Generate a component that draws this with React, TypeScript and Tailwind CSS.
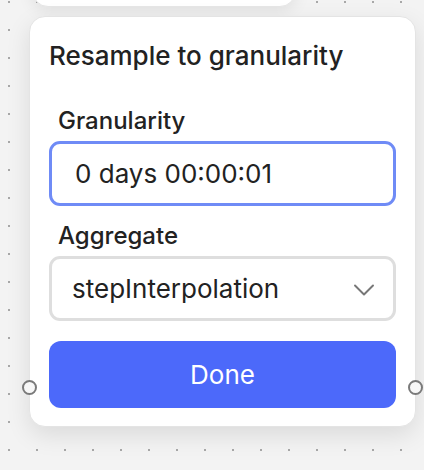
import { ChevronDown } from 'lucide-react';

// Handle dot on the side of a node
function Handle({ side }: { side: 'left' | 'right' }) {
  return (
    <div
      className={
        side === 'left'
          ? 'absolute left-[-8px] top-[363px] w-[15px] h-[15px] rounded-full border-2 border-[#7a7a7a] bg-[#f7f7f7]'
          : 'absolute right-[-8px] top-[363px] w-[15px] h-[15px] rounded-full border-2 border-[#7a7a7a] bg-[#f7f7f7]'
      }
    />
  );
}

export default function App() {
  return (
    <div
      className="relative w-[424px] h-[470px] overflow-hidden bg-[#f3f3f3] bg-[radial-gradient(circle,#a8a8a8_1px,transparent_1.2px)] bg-[length:28px_28px] bg-[position:-5px_-12px]"
      style={{ fontFamily: 'Inter, "Noto Sans", sans-serif' }}
    >
      {/* previous node, mostly off screen */}
      <div className="absolute left-[32px] top-[-60px] w-[264px] h-[67px] rounded-[16px] bg-white border border-[#e6e6e6] shadow-[0_4px_16px_rgba(0,0,0,0.08)]" />

      {/* resample node */}
      <div className="absolute left-[29px] top-[16px] w-[387px] h-[411px] rounded-[16px] bg-white border border-[#e4e4e4] shadow-[0_8px_24px_rgba(0,0,0,0.10)]">
        <div className="flex flex-col px-[19px] pt-[23px]">
          <h2 className="text-[26px] leading-[32px] font-medium text-[#222]">Resample to granularity</h2>

          <label className="mt-[34px] ml-[9px] text-[24px] leading-[29px] font-medium text-[#222]">Granularity</label>
          <div className="mt-[6px] h-[65px] flex items-center px-[23px] rounded-[11px] border-[3px] border-[#6f8bf6]">
            <span className="text-[26px] leading-[32px] text-[#222]">0 days 00:00:01</span>
          </div>

          <label className="mt-[15px] ml-[9px] text-[24px] leading-[29px] font-medium text-[#222]">Aggregate</label>
          <div className="mt-[6px] h-[65px] flex items-center justify-between pl-[20px] pr-[11px] rounded-[11px] border-[3px] border-[#dedede]">
            <span className="text-[26px] leading-[32px] text-[#222]">stepInterpolation</span>
            <ChevronDown size={36} strokeWidth={1.3} className="text-[#777] mt-[2px]" />
          </div>

          <button className="mt-[20px] h-[67px] rounded-[12px] bg-[#4c69fa] text-white text-[26px]">
            Done
          </button>
        </div>
        <Handle side="left" />
        <Handle side="right" />
      </div>
    </div>
  );
}
